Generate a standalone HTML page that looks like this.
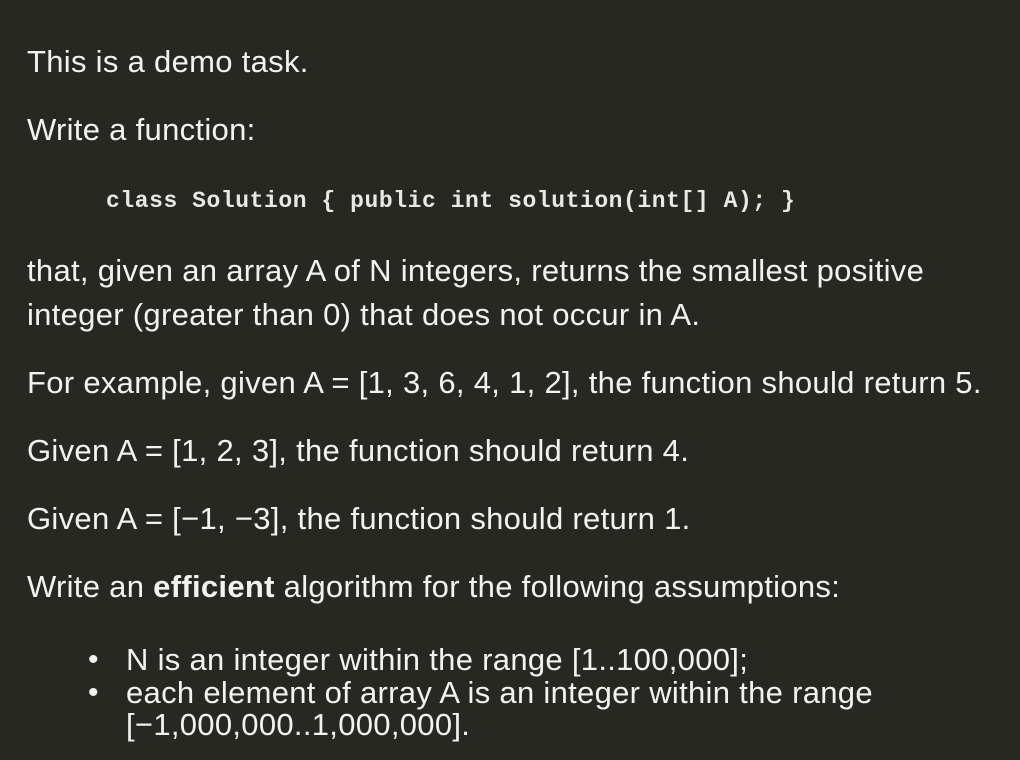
<!DOCTYPE html>
<html><head><meta charset="utf-8"><style>
html,body{margin:0;padding:0;}
body{width:1020px;height:760px;background:#272822;color:#f2f2f0;font-family:"Liberation Sans",sans-serif;font-size:31px;position:relative;overflow:hidden;letter-spacing:0.3px}
.l{position:absolute;left:27px;white-space:nowrap;line-height:44px;height:44px}
.c{position:absolute;left:106px;font-family:"Liberation Mono",monospace;font-size:23px;font-weight:bold;letter-spacing:0.56px;line-height:44px;white-space:pre;color:#e8e8e4}
.b{font-size:30px}
</style></head><body>
<div class="l" style="top:40px">This is a demo task.</div>
<div class="l" style="top:108px">Write a function:</div>
<div class="c" style="top:179px">class Solution { public int solution(int[] A); }</div>
<div class="l" style="top:249px">that, given an array A of N integers, returns the smallest positive</div>
<div class="l" style="top:293px">integer (greater than 0) that does not occur in A.</div>
<div class="l" style="top:361px">For example, given A = [1, 3, 6, 4, 1, 2], the function should return 5.</div>
<div class="l" style="top:429px">Given A = [1, 2, 3], the function should return 4.</div>
<div class="l" style="top:497px">Given A = [−1, −3], the function should return 1.</div>
<div class="l" style="top:565px">Write an <b>efficient</b> algorithm for the following assumptions:</div>
<div class="l b" style="top:638px;left:88px">•</div>
<div class="l" style="top:638px;left:126px">N is an integer within the range [1..100,000];</div>
<div class="l b" style="top:671px;left:88px">•</div>
<div class="l" style="top:671px;left:126px">each element of array A is an integer within the range</div>
<div class="l" style="top:703px;left:126px">[−1,000,000..1,000,000].</div>
</body></html>
